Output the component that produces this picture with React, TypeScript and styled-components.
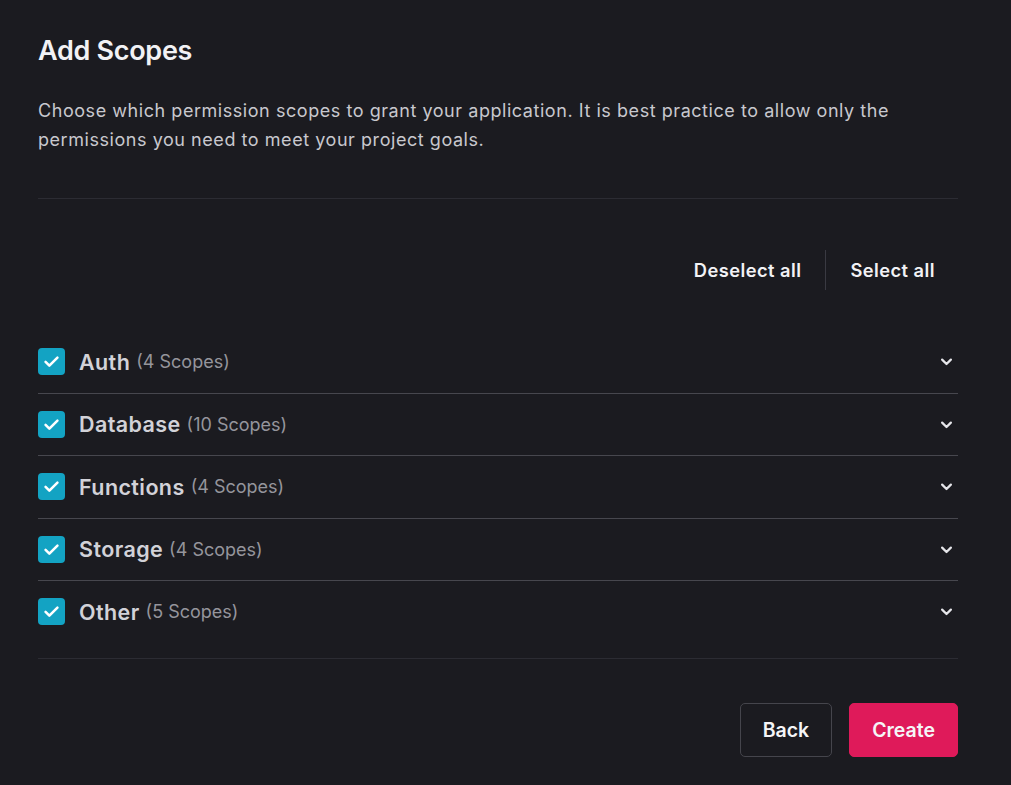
import styled, { createGlobalStyle } from 'styled-components'

const GlobalStyle = createGlobalStyle`
  html, body {
    margin: 0;
    padding: 0;
    background: #1b1b20;
  }
  body {
    font-family: Inter, "Noto Sans", sans-serif;
    color: #e6e6ea;
  }
`

const Page = styled.div`
  width: 1011px;
  height: 785px;
  box-sizing: border-box;
  padding: 34px 53px 0 38px;
  background: #1b1b20;
`

const Title = styled.h1`
  margin: 0;
  font-size: 27px;
  font-weight: 600;
  letter-spacing: -0.3px;
  line-height: 34px;
  color: #f2f2f5;
`

const Description = styled.p`
  margin: 28px 0 0;
  font-size: 18px;
  letter-spacing: 0.55px;
  line-height: 29px;
  color: #c8c8ce;
`

const Divider = styled.hr`
  margin: 0;
  border: 0;
  height: 1px;
  background: #2c2c33;
`

const TopDivider = styled(Divider)`
  margin-top: 44px;
`

const Toolbar = styled.div`
  display: flex;
  justify-content: flex-end;
  align-items: center;
  margin-top: 50px;
  margin-right: 23px;
  height: 42px;
`

const TextButton = styled.button`
  background: none;
  border: 0;
  padding: 0;
  font-family: inherit;
  font-size: 18.3px;
  letter-spacing: 0.45px;
  font-weight: 600;
  color: #f2f2f5;
  cursor: pointer;
`

const ToolSep = styled.span`
  width: 1px;
  height: 40px;
  background: #3a3a42;
  margin: 0 24px;
`

const List = styled.div`
  margin-top: 40px;
`

const Row = styled.div<{ $last?: boolean }>`
  display: flex;
  align-items: center;
  height: 61.5px;
  border-bottom: 1px solid ${(p) => (p.$last ? 'transparent' : '#47474e')};
`

const Box = styled.span`
  width: 27px;
  height: 27px;
  border-radius: 4px;
  background: #13a3c3;
  display: flex;
  align-items: center;
  justify-content: center;
  flex-shrink: 0;
`

const Label = styled.span`
  margin-left: 14px;
  font-size: 21.5px;
  letter-spacing: 0.4px;
  font-weight: 600;
  color: #d2d2d8;
`

const Count = styled.span`
  margin-left: 6px;
  font-size: 18px;
  color: #95959c;
`

const Chevron = styled.span`
  margin-left: auto;
  margin-right: 4px;
  display: flex;
  color: #e6e6ea;
`

const BottomDivider = styled(Divider)`
  margin-top: 14px;
`

const Footer = styled.div`
  display: flex;
  justify-content: flex-end;
  gap: 17px;
  margin-top: 44px;
`

const ActionButton = styled.button<{ $primary?: boolean }>`
  height: 54px;
  padding: 0 22px;
  border-radius: 5px;
  font-family: inherit;
  font-size: 19.5px;
  font-weight: 600;
  cursor: pointer;
  color: #f5f5f7;
  background: ${(p) => (p.$primary ? '#df1a5a' : 'transparent')};
  border: 1px solid ${(p) => (p.$primary ? '#df1a5a' : '#45454c')};
`

const scopes = [
  { name: 'Auth', count: 4 },
  { name: 'Database', count: 10 },
  { name: 'Functions', count: 4 },
  { name: 'Storage', count: 4 },
  { name: 'Other', count: 5 },
]

const Check = () => (
  <svg width="19" height="19" viewBox="0 0 24 24" fill="none" stroke="#fff" strokeWidth="3.2" strokeLinecap="round" strokeLinejoin="round">
    <path d="M4.5 12.5l4.8 4.8L19.5 7" />
  </svg>
)

const Down = () => (
  <svg width="15" height="15" viewBox="0 0 24 24" fill="none" stroke="currentColor" strokeWidth="3.6" strokeLinecap="round" strokeLinejoin="round">
    <path d="M5 9l7 7 7-7" />
  </svg>
)

export default function App() {
  return (
    <>
      <GlobalStyle />
      <Page>
        <Title>Add Scopes</Title>
        <Description>
          Choose which permission scopes to grant your application. It is best practice to allow only the
          permissions you need to meet your project goals.
        </Description>
        <TopDivider />
        <Toolbar>
          <TextButton>Deselect all</TextButton>
          <ToolSep />
          <TextButton>Select all</TextButton>
        </Toolbar>
        <List>
          {scopes.map((s, i) => (
            <Row key={s.name} $last={i === scopes.length - 1}>
              <Box>
                <Check />
              </Box>
              <Label>{s.name}</Label>
              <Count>({s.count} Scopes)</Count>
              <Chevron>
                <Down />
              </Chevron>
            </Row>
          ))}
        </List>
        <BottomDivider />
        <Footer>
          <ActionButton>Back</ActionButton>
          <ActionButton $primary>Create</ActionButton>
        </Footer>
      </Page>
    </>
  )
}
